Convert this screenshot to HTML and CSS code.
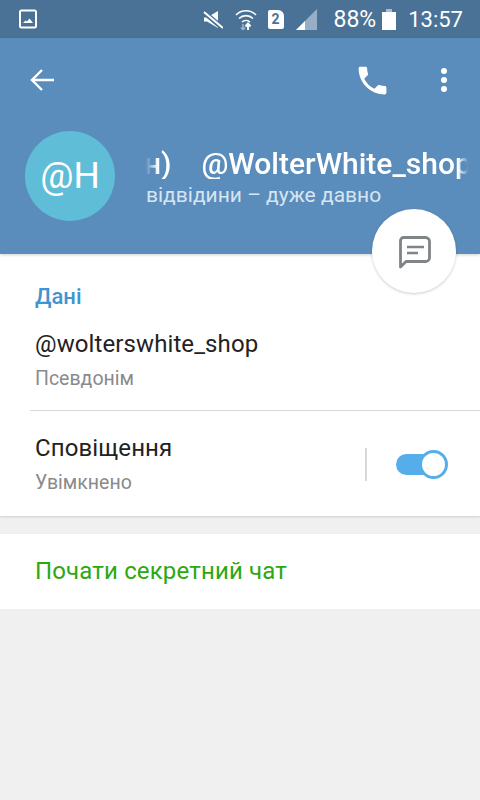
FILE: index.html
```html
<!DOCTYPE html>
<html>
<head>
    <title>Профіль</title>
    <link rel="stylesheet" href="styles.css">
</head>
<body>
    <div class="statusBar">
        <svg class="galleryIcon" width="18" height="20" viewBox="0 0 18 20">
            <rect x="1" y="1.500" width="16" height="17" rx="1.500" fill="none" stroke="#fff" stroke-width="2"/>
            <path d="M4 14l2.500-2.500 1.500 1 2.500-3 3.500 4.500z" fill="#fff"/>
        </svg>
        <div class="statusRight">
            <svg class="muteIcon" width="20" height="20" viewBox="0 0 20 20">
                <path d="M1 7.500h3L15 1v17L4 11.500H1z" fill="#fff"/>
                <path d="M0 1.500l19 16" stroke="#4a7297" stroke-width="5"/>
                <path d="M1 2l19 16" stroke="#fff" stroke-width="2"/>
            </svg>
            <svg class="wifiIcon" width="22" height="21" viewBox="0 0 22 21">
                <path d="M1 6a14 14 0 0 1 20 0M4 9.500a10 10 0 0 1 14 0M7 13a6 6 0 0 1 8 0" fill="none" stroke="#fff" stroke-width="1.600"/>
                <path d="M8 15v6M6 18.500l2 2.500 2-2.500" fill="none" stroke="#9db3c8" stroke-width="1.600"/>
                <path d="M13 21v-6M10.500 17.500l2.500-3 2.500 3" fill="none" stroke="#fff" stroke-width="2"/>
            </svg>
            <div class="simBadge">2</div>
            <svg class="signalIcon" width="21" height="21" viewBox="0 0 21 21">
                <path d="M0 21L21 0v21z" fill="#96aec6"/>
                <path d="M0 21l9-9v9z" fill="#fff"/>
            </svg>
            <span class="battery">88%</span>
            <div class="batteryIcon"></div>
            <span class="clock">13:57</span>
        </div>
    </div>

    <div class="profileHeader">
        <div class="toolbar">
            <svg class="backIcon" width="26" height="26" viewBox="0 0 26 26">
                <path d="M25 13H3M13 3L3 13l10 10" fill="none" stroke="#fff" stroke-width="2.400"/>
            </svg>
            <svg class="phoneIcon" width="37" height="37" viewBox="0 0 24 24">
                <path d="M6.620 10.790c1.440 2.830 3.760 5.140 6.590 6.590l2.200-2.200c.27-.27.670-.36 1.020-.24 1.120.37 2.330.57 3.570.57.550 0 1 .45 1 1V20c0 .55-.45 1-1 1-9.390 0-17-7.610-17-17 0-.55.450-1 1-1h3.500c.55 0 1 .45 1 1 0 1.250.2 2.450.57 3.570.11.350.03.740-.25 1.020z" fill="#fff"/>
            </svg>
            <div class="moreIcon"><i></i><i></i><i></i></div>
        </div>
        <div class="profileInfo">
            <div class="avatar">@H</div>
            <div class="profileText">
                <div class="profileName"><span class="nameInner">н)&nbsp;&nbsp;&nbsp;&nbsp;@WolterWhite_shop</span></div>
                <div class="profileSeen">відвідини – дуже давно</div>
            </div>
        </div>
        <div class="messageFab">
            <svg width="38" height="38" viewBox="0 0 38 38">
                <path d="M8.500 5.500h22a4 4 0 0 1 4 4v16a4 4 0 0 1-4 4H11l-5.500 5.500V8.500a3 3 0 0 1 3-3z" fill="none" stroke="#7f8487" stroke-width="2.800" stroke-linejoin="round"/>
                <path d="M12 15h17M12 21h11" stroke="#7f8487" stroke-width="2.400"/>
            </svg>
        </div>
    </div>

    <div class="card infoCard">
        <div class="sectionTitle">Дані</div>
        <div class="row usernameRow">
            <div class="rowTitle">@wolterswhite_shop</div>
            <div class="rowSub">Псевдонім</div>
        </div>
        <div class="divider"></div>
        <div class="row notifyRow">
            <div>
                <div class="rowTitle">Сповіщення</div>
                <div class="rowSub">Увімкнено</div>
            </div>
            <div class="switchWrap">
                <div class="switch"><div class="knob"></div></div>
            </div>
        </div>
    </div>

    <div class="card secretCard">Почати секретний чат</div>
</body>
</html>
```

FILE: styles.css
```css
body {
    margin: 0;
    background: #f0f0f0;
    font-family: Roboto, "Noto Sans", sans-serif;
    color: #222;
}

.statusBar {
    height: 38px;
    background: #4a7297;
    display: flex;
    align-items: center;
    justify-content: space-between;
    padding: 0 17px 0 19px;
    color: #fff;
}

.statusRight {
    display: flex;
    align-items: center;
}

.muteIcon {
    margin-right: 12px;
    margin-top: 1px;
}

.wifiIcon {
    margin-right: 11px;
}

.simBadge {
    width: 16px;
    height: 19px;
    margin-right: 12px;
    background: #fff;
    border-radius: 2px 6px 2px 2px;
    color: #4a7297;
    font-size: 14px;
    font-weight: 700;
    line-height: 19px;
    text-align: center;
}

.signalIcon {
    margin-right: 17px;
}

.battery {
    font-size: 23px;
    margin-right: 6px;
}

.batteryIcon {
    width: 14px;
    height: 18px;
    margin-top: 3px;
    margin-right: 12px;
    background: #fff;
    position: relative;
}

.batteryIcon::before {
    content: "";
    position: absolute;
    top: -3px;
    left: 4px;
    width: 6px;
    height: 3px;
    background: #a9bccf;
}

.clock {
    font-size: 22px;
}

.profileHeader {
    height: 216px;
    background: #5b8dbc;
    position: relative;
    box-shadow: 0 1px 3px rgba(0, 0, 0, 0.18);
}

.toolbar {
    height: 84px;
    display: flex;
    align-items: center;
    padding: 0 33px 0 29px;
}

.backIcon {
    margin-right: auto;
}

.phoneIcon {
    margin-right: 50px;
}

.moreIcon {
    display: flex;
    flex-direction: column;
    gap: 2.700px;
}

.moreIcon i {
    width: 6px;
    height: 6px;
    border-radius: 50%;
    background: #fff;
}

.profileInfo {
    display: flex;
    align-items: center;
    padding: 9px 12px 0 25px;
}

.avatar {
    width: 90px;
    height: 90px;
    border-radius: 50%;
    background: #5fbdd7;
    color: #fff;
    font-size: 37px;
    line-height: 90px;
    text-align: center;
    flex-shrink: 0;
}

.profileText {
    margin: 5px 0 0 32px;
    min-width: 0;
    flex: 1;
}

.profileName {
    overflow: hidden;
    margin-left: -1px;
    white-space: nowrap;
    color: #fff;
    font-size: 30px;
    font-weight: 500;
    line-height: 30px;
    -webkit-mask-image: linear-gradient(to right, transparent, #000 12px, #000 calc(100% - 10px), transparent);
    mask-image: linear-gradient(to right, transparent, #000 12px, #000 calc(100% - 10px), transparent);
}

.nameInner {
    display: inline-block;
    margin-left: -2px;
}

.profileSeen {
    margin: 3px 0 0 -1px;
    color: #d6e5f2;
    font-size: 21px;
    line-height: 26px;
}

.messageFab {
    position: absolute;
    left: 372px;
    top: 171px;
    width: 84px;
    height: 84px;
    border-radius: 50%;
    background: #fff;
    box-shadow: 0 1px 3px rgba(0, 0, 0, 0.2);
    display: flex;
    align-items: center;
    justify-content: center;
}

.card {
    background: #fff;
    box-shadow: 0 1px 2px rgba(0, 0, 0, 0.14);
}

.infoCard {
    height: 262px;
}

.sectionTitle {
    padding: 29px 35px 0;
    color: #3f94d1;
    font-size: 22px;
    font-weight: 500;
    line-height: 28px;
}

.row {
    padding: 0 35px;
}

.usernameRow {
    padding-top: 19px;
    height: 99px;
    box-sizing: border-box;
}

.rowTitle {
    font-size: 24px;
    letter-spacing: 0.1px;
    line-height: 28px;
    color: #222;
}

.rowSub {
    margin-top: 9px;
    font-size: 19.500px;
    line-height: 24px;
    color: #8a8a8a;
}

.divider {
    height: 1px;
    margin: 0 0 0 30px;
    background: #d9d9d9;
}

.notifyRow {
    display: flex;
    align-items: center;
    justify-content: space-between;
    padding: 23px 36px 0 35px;
}

.switchWrap {
    border-left: 2px solid #d8d8d8;
    height: 33px;
    padding-left: 29px;
    display: flex;
    align-items: center;
}

.switch {
    width: 48px;
    height: 21px;
    border-radius: 11px;
    background: #55aeea;
    position: relative;
}

.knob {
    position: absolute;
    right: -4px;
    top: -4px;
    width: 23px;
    height: 23px;
    border: 3px solid #55aeea;
    border-radius: 50%;
    background: #fff;
}

.secretCard {
    margin-top: 18px;
    height: 75px;
    padding: 0 35px;
    color: #2ca811;
    font-size: 24px;
    letter-spacing: 0.15px;
    line-height: 75px;
}
```
